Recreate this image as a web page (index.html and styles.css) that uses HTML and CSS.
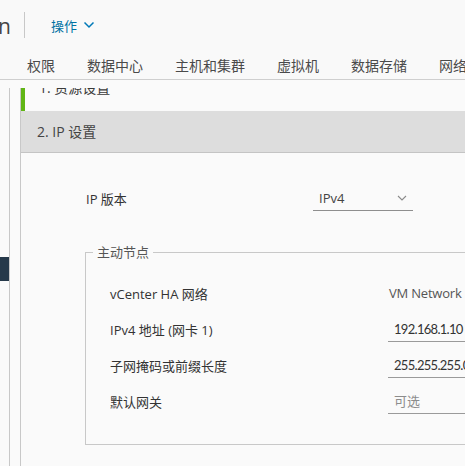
FILE: index.html
```html
<!DOCTYPE html>
<html lang="zh">
<head>
<meta charset="utf-8">
<title>IP 设置</title>
<link rel="stylesheet" href="styles.css">
</head>
<body>
<div class="page">
  <header class="top">
    <span class="obj-name">n</span>
    <span class="divider"></span>
    <span class="actions">操作
      <svg class="chev" width="12" height="12" viewBox="0 0 12 12"><polyline points="1.5,3.5 6,8 10.5,3.5" fill="none" stroke="#0079b8" stroke-width="1.5"/></svg>
    </span>
  </header>
  <nav class="tabs">
    <span>权限</span>
    <span>数据中心</span>
    <span>主机和集群</span>
    <span>虚拟机</span>
    <span>数据存储</span>
    <span>网络</span>
  </nav>
  <div class="layout">
    <aside class="side">
      <div class="side-item"></div>
    </aside>
    <section class="wizard">
      <div class="step done"><span class="step-text">1. 资源设置</span></div>
      <div class="step-head">2. IP 设置</div>
      <div class="form">
        <div class="row-top">
          <span class="label-top">IP 版本</span>
          <div class="select">
            <span>IPv4</span>
            <svg width="10" height="8" viewBox="0 0 10 8"><polyline points="1,2 5,6 9,2" fill="none" stroke="#8a8a8a" stroke-width="1.1"/></svg>
          </div>
        </div>
        <fieldset class="group">
          <legend>主动节点</legend>
          <div class="row"><span class="label">vCenter HA 网络</span><span class="static">VM Network</span></div>
          <div class="row"><span class="label">IPv4 地址 (网卡 1)</span><span class="input">192.168.1.10</span></div>
          <div class="row"><span class="label">子网掩码或前缀长度</span><span class="input">255.255.255.0</span></div>
          <div class="row"><span class="label">默认网关</span><span class="input placeholder">可选</span></div>
        </fieldset>
      </div>
    </section>
  </div>
</div>
</body>
</html>
```
FILE: styles.css
```css
* { box-sizing: border-box; }
html, body { margin: 0; padding: 0; }
body {
  width: 465px;
  height: 466px;
  overflow: hidden;
  background: #fafafa;
  font-family: "Open Sans", "Noto Sans CJK SC", sans-serif;
  color: #333;
}
.page { width: 465px; height: 466px; overflow: hidden; }

.top {
  height: 50px;
  display: flex;
  align-items: center;
  background: #f9f9f9;
}
.obj-name {
  font-size: 21px;
  color: #444;
  margin-left: -2px;
  width: 26px;
  line-height: 26px;
  margin-top: 1px;
}
.divider {
  width: 1px;
  height: 26px;
  background: #c8c8c8;
}
.actions {
  margin-left: 26px;
  font-size: 13px;
  color: #0072a3;
  display: flex;
  align-items: center;
  gap: 6px;
}

.tabs {
  height: 30px;
  display: flex;
  align-items: center;
  gap: 32px;
  padding-left: 27px;
  white-space: nowrap;
  font-size: 14px;
  color: #4a4a4a;
  border-bottom: 1px solid #cfcfcf;
  background: #f9f9f9;
  overflow: hidden;
}

.layout {
  display: flex;
  margin-top: 8px;
  height: 400px;
}
.side {
  width: 10px;
  border-right: 1px solid #c8c8c8;
  flex: none;
}
.side-item {
  margin-top: 169px;
  height: 24px;
  width: 9px;
  background: #26394a;
}
.wizard {
  margin-left: 10px;
  border-left: 1px solid #c8c8c8;
  flex: 1;
  background: #fafafa;
}
.step {
  height: 23px;
  overflow: hidden;
  border-left: 4px solid #60b515;
  padding-left: 14px;
}
.step-text {
  display: block;
  font-size: 14px;
  line-height: 20px;
  margin-top: -10px;
  color: #3a3a3a;
}
.step-head {
  height: 42px;
  background: #dddddd;
  border-bottom: 1px solid #c4c4c4;
  font-size: 14px;
  color: #444;
  padding-left: 16px;
  line-height: 41px;
}
.form {
  padding-left: 64px;
  padding-top: 33px;
}
.row-top {
  display: flex;
  align-items: center;
  height: 25px;
  padding-left: 1px;
}
.label-top {
  width: 227px;
  font-size: 13px;
  color: #333;
}
.select {
  width: 100px;
  height: 25px;
  border-bottom: 1px solid #8e8e8e;
  display: flex;
  align-items: center;
  justify-content: space-between;
  padding: 0 6px 0 6px;
  font-size: 13px;
  color: #444;
}
.group {
  margin: 32px 0 0 0;
  width: 500px;
  border: 1px solid #c8c8c8;
  padding: 14px 0 25px 24px;
}
.group legend {
  font-size: 13px;
  line-height: 18px;
  color: #555;
  padding: 0 4px;
  margin-left: -17px;
}
.row {
  height: 36px;
  display: flex;
  align-items: center;
  font-size: 13px;
}
.label {
  width: 278px;
  color: #333;
  flex: none;
}
.static {
  color: #555;
  padding-left: 1px;
  letter-spacing: -0.2px;
}
.input {
  width: 120px;
  height: 25px;
  line-height: 24px;
  border-bottom: 1px solid #9a9a9a;
  padding-left: 6px;
  color: #333;
  white-space: nowrap;
  font-family: "Lato", "Noto Sans CJK SC", sans-serif;
  letter-spacing: -0.7px;
}
.placeholder { color: #8c8c8c; font-family: "Noto Sans CJK SC", sans-serif; letter-spacing: 0; }
```
